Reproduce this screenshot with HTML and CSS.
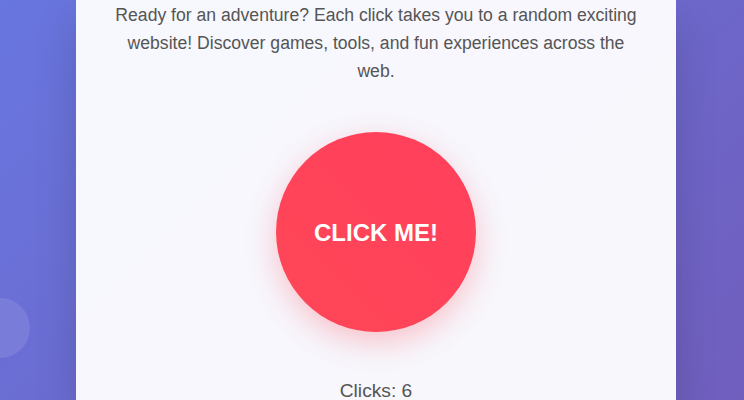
FILE: index.html
```html
<!DOCTYPE html>
<html lang="en">
<head>
<meta charset="utf-8">
<title>Random Website</title>
<link rel="stylesheet" href="styles.css">
</head>
<body>
<div class="bubble"></div>
<main class="page">
  <section class="card">
    <p class="intro">Ready for an adventure? Each click takes you to a random exciting website! Discover games, tools, and fun experiences across the web.</p>
    <div class="btn-wrap">
      <button class="big-btn" type="button">CLICK ME!</button>
    </div>
    <p class="counter">Clicks: 6</p>
  </section>
</main>
</body>
</html>
```

FILE: styles.css
```css
html, body {
  margin: 0;
  padding: 0;
}
body {
  height: 400px;
  overflow: hidden;
  background: linear-gradient(135deg, #6876df 0%, #705ebd 100%);
  font-family: "Liberation Sans", Arial, sans-serif;
  position: relative;
}
.bubble {
  position: absolute;
  left: -30px;
  top: 298px;
  width: 60px;
  height: 60px;
  border-radius: 50%;
  background: rgba(255, 255, 255, 0.1);
}
.page {
  display: flex;
  justify-content: center;
  height: 400px;
  padding-left: 8px;
}
.card {
  width: 600px;
  box-sizing: border-box;
  padding: 1px 35px 0;
  background: rgba(255, 255, 255, 0.95);
  box-shadow: 0 20px 40px rgba(0, 0, 0, 0.15);
  text-align: center;
}
.intro {
  margin: 0;
  font-size: 17.6px;
  line-height: 28px;
  color: #555;
}
.btn-wrap {
  display: flex;
  justify-content: center;
  margin-top: 47px;
}
.big-btn {
  width: 200px;
  height: 200px;
  border: none;
  border-radius: 50%;
  background: linear-gradient(45deg, #ff4757, #ff3f5c);
  color: #fff;
  font-family: "Liberation Sans", Arial, sans-serif;
  font-size: 24px;
  font-weight: bold;
  box-shadow: 0 10px 30px rgba(255, 71, 87, 0.3);
  padding: 2px 0 0;
}
.counter {
  margin: 45px 0 0;
  font-size: 19.2px;
  line-height: 28px;
  color: #555;
}
```
